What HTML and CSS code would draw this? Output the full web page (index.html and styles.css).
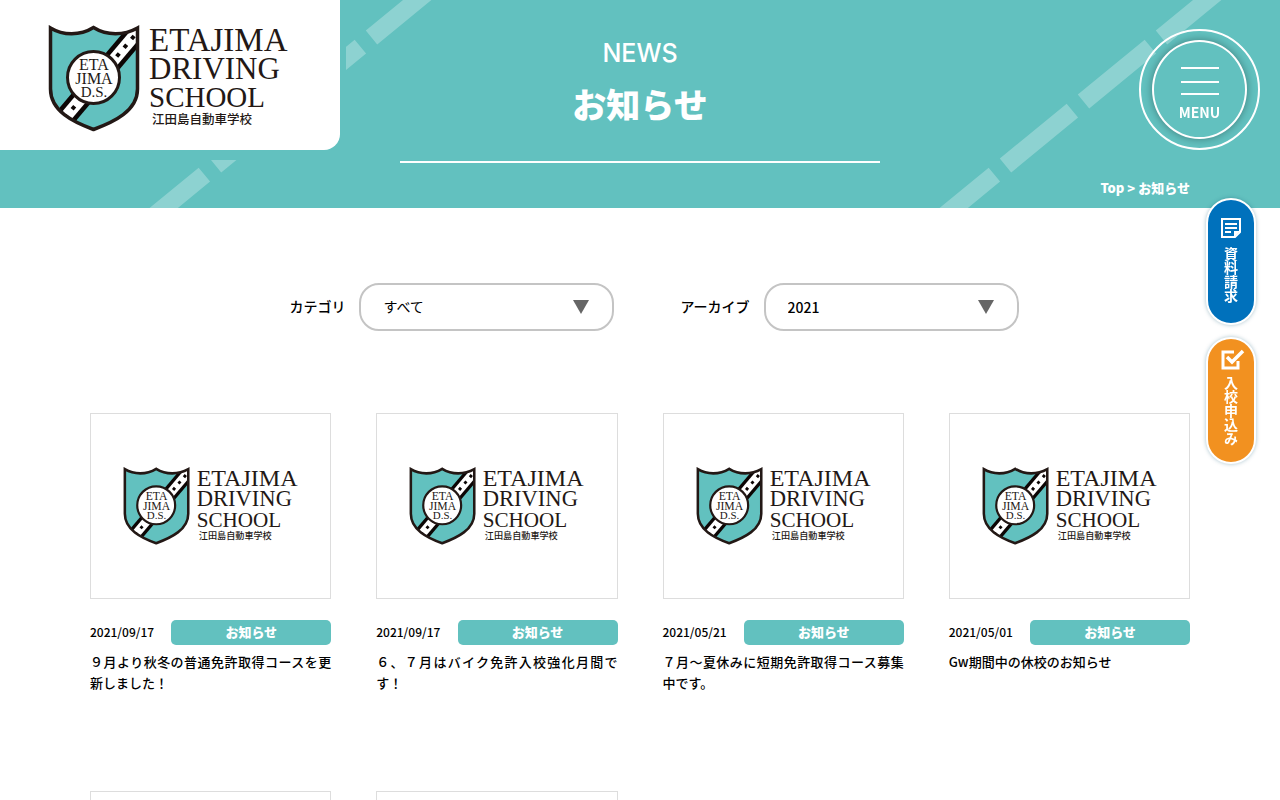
FILE: index.html
```html
<!DOCTYPE html>
<html lang="ja">
<head>
    <meta charset="UTF-8">
    <meta name="viewport" content="width=device-width, initial-scale=1.0">
    <title>お知らせ | 江田島自動車学校</title>
    <link rel="stylesheet" href="styles.css">
</head>
<body>
    <svg class="sprite" aria-hidden="true">
        <symbol id="logo" viewBox="0 0 240 107">
            <clipPath id="shield">
                <path d="M2 4C15 11 32 11 45.500 2C59 11 76 11 90 4V64C90 86 66 97 45.500 105C25 97 2 86 2 64Z"/>
            </clipPath>
            <g clip-path="url(#shield)">
                <rect width="92" height="107" fill="#62c1bf"/>
                <path d="M9 102L94 1.500" stroke="#0c0605" stroke-width="21"/>
                <path d="M9 102L94 1.500" stroke="#fff" stroke-width="12"/>
                <path d="M18 91.500L92 4" stroke="#0c0605" stroke-width="4" stroke-dasharray="4 7.500" stroke-dashoffset="2"/>
            </g>
            <path d="M2.500 3C15 10.500 32 11 45.500 2.500C59 11 76 10.500 89.500 3V64C89.500 86 66 97 45.500 104.500C25 97 2.500 86 2.500 64Z" fill="none" stroke="#231815" stroke-width="3.500"/>
            <circle cx="45.500" cy="52.500" r="26" fill="#fff" stroke="#231815" stroke-width="3"/>
            <g class="logo-serif" text-anchor="middle" font-size="16">
                <text x="46" y="45">ETA</text>
                <text x="46" y="59">JIMA</text>
                <text x="46" y="72" font-size="15">D.S.</text>
            </g>
            <g class="logo-serif">
                <text x="101" y="26" font-size="33">ETAJIMA</text>
                <text x="101" y="54" font-size="31">DRIVING</text>
                <text x="101" y="82" font-size="29">SCHOOL</text>
            </g>
            <text class="logo-ja" x="104" y="99" font-size="12.500">江田島自動車学校</text>
        </symbol>
    </svg>

    <header class="header">
        <svg class="road" viewBox="0 0 1280 208" preserveAspectRatio="xMidYMid slice" aria-hidden="true">
            <g stroke="#fff" stroke-opacity="0.28" stroke-width="18" stroke-dasharray="86.500 14.400">
                <path d="M927.500 229.500L1317.500 -90.500"/>
                <path d="M137.500 229.500L527.500 -90.500"/>
            </g>
        </svg>
        <div class="logo-wrap">
            <a class="logo" href="#" aria-label="江田島自動車学校">
                <svg viewBox="0 0 240 107"><use href="#logo"/></svg>
            </a>
        </div>
        <div class="heading">
            <p class="heading-en">NEWS</p>
            <h1>お知らせ</h1>
        </div>
        <nav class="breadcrumb">
            <a href="#">Top</a> &gt; お知らせ
        </nav>
    </header>

    <button class="menu" type="button">
        <span class="menu-inner">
            <svg viewBox="0 0 38 28" stroke="#fff" stroke-width="2" aria-hidden="true">
                <path d="M0 1H38M0 15H38M0 27H38"/>
            </svg>
            MENU
        </span>
    </button>

    <aside class="side">
        <a class="side-link request" href="#">
            <svg viewBox="0 0 22 22" fill="none" stroke="#fff" stroke-width="2" aria-hidden="true">
                <path d="M2 2H20V15L15 20H2ZM5 7H17M5 11H17M5 15H11"/>
                <path d="M14 20V14H20Z" fill="#fff" stroke="none"/>
            </svg>
            <span>資料請求</span>
        </a>
        <a class="side-link apply" href="#">
            <svg viewBox="0 0 22 22" fill="none" stroke="#fff" stroke-width="3" aria-hidden="true">
                <path d="M14 3H3V19H18V12"/>
                <path d="M7 8L12 13L23 2" stroke-width="3.500"/>
            </svg>
            <span>入校申込み</span>
        </a>
    </aside>

    <main class="container">
        <form class="filters">
            <div class="filter">
                <label for="category">カテゴリ</label>
                <div class="select">
                    <select id="category">
                        <option>すべて</option>
                    </select>
                </div>
            </div>
            <div class="filter">
                <label for="archive">アーカイブ</label>
                <div class="select select-year">
                    <select id="archive">
                        <option>2021</option>
                    </select>
                </div>
            </div>
        </form>

        <div class="news-list">
            <a class="card" href="#">
                <div class="thumb"><svg viewBox="0 0 240 107"><use href="#logo"/></svg></div>
                <div class="meta"><time>2021/09/17</time><span class="tag">お知らせ</span></div>
                <p class="title">９月より秋冬の普通免許取得コースを更新しました！</p>
            </a>
            <a class="card" href="#">
                <div class="thumb"><svg viewBox="0 0 240 107"><use href="#logo"/></svg></div>
                <div class="meta"><time>2021/09/17</time><span class="tag">お知らせ</span></div>
                <p class="title">６、７月はバイク免許入校強化月間です！</p>
            </a>
            <a class="card" href="#">
                <div class="thumb"><svg viewBox="0 0 240 107"><use href="#logo"/></svg></div>
                <div class="meta"><time>2021/05/21</time><span class="tag">お知らせ</span></div>
                <p class="title">７月～夏休みに短期免許取得コース募集中です。</p>
            </a>
            <a class="card" href="#">
                <div class="thumb"><svg viewBox="0 0 240 107"><use href="#logo"/></svg></div>
                <div class="meta"><time>2021/05/01</time><span class="tag">お知らせ</span></div>
                <p class="title">Gw期間中の休校のお知らせ</p>
            </a>
            <a class="card" href="#" aria-label="お知らせ">
                <div class="thumb"></div>
            </a>
            <a class="card" href="#" aria-label="お知らせ">
                <div class="thumb"></div>
            </a>
        </div>
    </main>
</body>
</html>
```

FILE: styles.css
```css
* {
    box-sizing: border-box;
}
body {
    margin: 0;
    font-family: "Noto Sans CJK JP", sans-serif;
    font-size: 13px;
    font-weight: 500;
    color: #000;
    background-color: #fff;
}
a {
    color: inherit;
    text-decoration: none;
}
h1, p {
    margin: 0;
}
.sprite {
    position: absolute;
    width: 0;
    height: 0;
}
.logo-serif {
    font-family: "Liberation Serif", serif;
    font-weight: 400;
    fill: #231815;
}
.logo-ja {
    font-family: "Noto Sans CJK JP", sans-serif;
    font-weight: 500;
    fill: #231815;
}

/* header */
.header {
    position: relative;
    padding: 36px 90px 10px;
    background-color: #62c1bf;
    color: #fff;
}
.road {
    position: absolute;
    top: 0;
    left: 0;
    width: 100%;
    height: 100%;
}
.logo-wrap {
    position: absolute;
    top: 0;
    left: 0;
    padding: 0 6px 10px 0;
    background-color: #62c1bf;
}
.logo {
    display: block;
    padding: 25px 52px 18px 48px;
    background-color: #fff;
    border-bottom-right-radius: 16px;
}
.logo svg {
    display: block;
    width: 240px;
    height: 107px;
}
.heading {
    position: relative;
    max-width: 480px;
    margin: 0 auto;
    padding-bottom: 32px;
    border-bottom: 2px solid #fff;
    text-align: center;
}
.heading-en {
    font-family: Inter, sans-serif;
    font-size: 25px;
    font-weight: 500;
    line-height: 34px;
}
.heading h1 {
    padding-top: 9px;
    font-size: 34px;
    font-weight: 900;
    line-height: 50px;
}
.breadcrumb {
    position: relative;
    margin-top: 15px;
    font-weight: 900;
    line-height: 20px;
    text-align: right;
}

/* menu button */
.menu {
    position: fixed;
    top: 29px;
    right: 20px;
    width: 121px;
    height: 121px;
    padding: 9px 11px;
    border: 2px solid #fff;
    border-radius: 50%;
    background: none;
    color: #fff;
    font-family: inherit;
    font-size: 14px;
    font-weight: 700;
    line-height: 20px;
    cursor: pointer;
}
.menu-inner {
    display: flex;
    flex-direction: column;
    align-items: center;
    gap: 7px;
    height: 100%;
    padding-top: 25px;
    border: 2px solid #fff;
    border-radius: 50%;
    background-color: #62c1bf;
    box-shadow: 0 0 8px rgba(0, 0, 0, 0.35);
}
.menu svg {
    flex: none;
    width: 38px;
    height: 28px;
}

/* side links */
.side {
    position: fixed;
    top: 198px;
    right: 24px;
    display: grid;
    gap: 12px;
}
.side-link {
    display: flex;
    flex-direction: column;
    align-items: center;
    width: 50px;
    height: 127px;
    padding-top: 17px;
    border: 2px solid #fff;
    border-radius: 25px;
    box-shadow: 0 0 4px rgba(0, 80, 110, 0.35);
    color: #fff;
    font-size: 14px;
    font-weight: 700;
    line-height: 20px;
}
.side-link svg {
    width: 22px;
    height: 22px;
    overflow: visible;
}
.side-link span {
    padding-top: 8px;
    writing-mode: vertical-rl;
}
.request {
    background-color: #0071bc;
}
.apply {
    padding-top: 10px;
    background-color: #f29120;
}
.apply span {
    padding-top: 5px;
}

.container {
    max-width: 1280px;
    margin: 0 auto;
    padding: 75px 90px 98px;
}

/* filters */
.filters {
    display: flex;
    justify-content: center;
    gap: 66px;
    padding-left: 28px;
    margin-bottom: 82px;
    font-size: 14px;
}
.filter {
    display: flex;
    align-items: center;
    gap: 14px;
}
.filter label {
    padding-bottom: 2px;
}
.select {
    position: relative;
}
.select select {
    width: 255px;
    height: 48px;
    padding: 0 22px 2px;
    border: 2px solid #c4c4c4;
    border-radius: 20px;
    appearance: none;
    background-color: #fff;
    color: #000;
    font-family: inherit;
    font-size: 14px;
    font-weight: 400;
}
.select-year select {
    padding-bottom: 0;
    font-weight: 500;
}
.select::after {
    content: "";
    position: absolute;
    top: 17px;
    right: 25px;
    border-top: 14px solid #666;
    border-left: 8px solid transparent;
    border-right: 8px solid transparent;
    pointer-events: none;
}

/* news cards */
.news-list {
    display: grid;
    grid-template-columns: repeat(4, 1fr);
    gap: 98px 45px;
}
.thumb {
    display: flex;
    align-items: center;
    justify-content: center;
    height: 186px;
    border: 1px solid #ddd;
}
.thumb svg {
    width: 175px;
    height: 78px;
}
.meta {
    display: flex;
    align-items: center;
    justify-content: space-between;
    height: 25px;
    margin-top: 21px;
    font-size: 12px;
    line-height: 23px;
}
.meta time {
    padding-bottom: 2px;
}
.tag {
    width: 160px;
    padding-bottom: 2px;
    border-radius: 5px;
    background-color: #62c1bf;
    color: #fff;
    font-size: 13px;
    font-weight: 900;
    text-align: center;
}
.title {
    margin-top: 6px;
    line-height: 21px;
    text-align: justify;
}
```
